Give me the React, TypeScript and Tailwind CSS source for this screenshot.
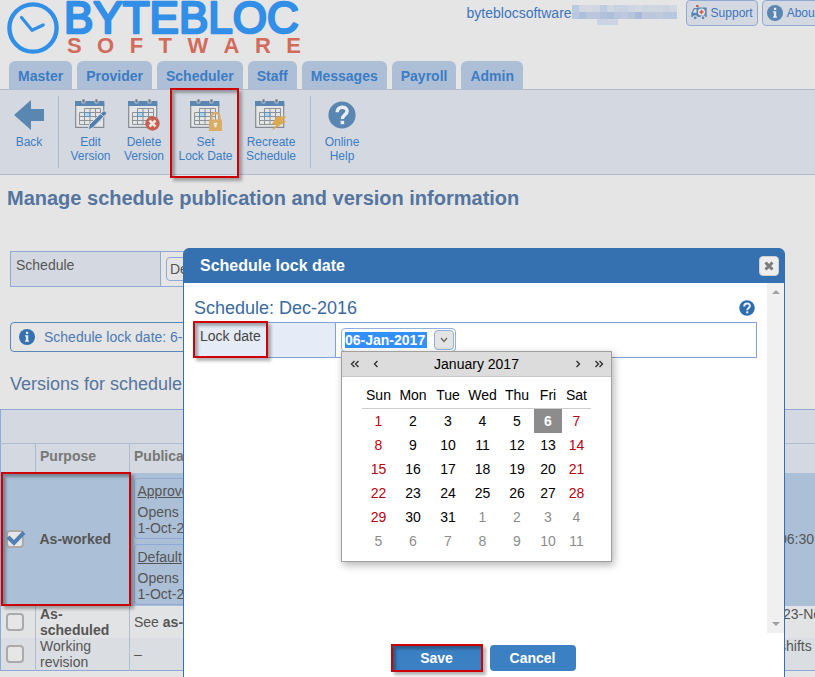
import React, { useState } from "react";

const tabs = ["Master", "Provider", "Scheduler", "Staff", "Messages", "Payroll", "Admin"];

const weekDays = [
  { name: "Sun", width: "w-[33px]" },
  { name: "Mon", width: "w-[36px]" },
  { name: "Tue", width: "w-[34px]" },
  { name: "Wed", width: "w-[35px]" },
  { name: "Thu", width: "w-[34px]" },
  { name: "Fri", width: "w-[28px]" },
  { name: "Sat", width: "w-[29px]" },
];

// January 2017, days after the 31st belong to the next month
const weeks = [0, 1, 2, 3, 4, 5].map((w) => weekDays.map((_, d) => w * 7 + d + 1));

const maskTop = [
  "bg-[#bccadf]", "bg-[#d0d7e3]", "bg-[#d3d8e2]", "bg-[#d0d7e3]", "bg-[#bfcce0]",
  "bg-[#cfd6e2]", "bg-[#c9d2e1]", "bg-[#c8d2e2]", "bg-[#ced6e3]", "bg-[#d2d8e2]",
  "bg-[#cdd5e2]", "bg-[#cfd6e2]", "bg-[#d0d6e1]", "bg-[#ccd4e1]", "bg-[#d2d8e2]",
];
const maskBottom = [
  "bg-[#b9c7de]", "bg-[#adc0db]", "bg-[#b9c6dd]", "bg-[#bcc7de]", "bg-[#b3c1dc]",
  "bg-[#abbfd9]", "bg-[#b9c6dd]", "bg-[#bfc9dd]", "bg-[#b6c4dc]", "bg-[#abb9d9]",
  "bg-[#bdc8dd]", "bg-[#bac7dd]", "bg-[#c0cadd]", "bg-[#b9c6dd]", "bg-[#b8c7df]",
];

const Highlight: React.FC<{ className: string }> = ({ className }) => (
  <div
    className={`absolute pointer-events-none border-2 border-[#cc0000] shadow-[3px_3px_3px_rgba(0,0,0,0.3),inset_3px_3px_3px_rgba(0,0,0,0.3)] ${className}`}
  />
);

const ClockLogo = () => (
  <svg className="w-13 h-13 shrink-0" viewBox="0 0 52 52" fill="none" stroke="#328fe8">
    <circle cx="26" cy="26" r="23.6" strokeWidth="4.4" />
    <path d="M14.5 15.5 25 28.3 36.2 23" strokeWidth="3.2" strokeLinecap="round" strokeLinejoin="round" />
  </svg>
);

const CalendarIcon: React.FC<{ children?: React.ReactNode }> = ({ children }) => (
  <svg className="w-8 h-8" viewBox="0 0 32 32">
    <path d="M.7 5v23.4h28V5z" fill="#e4e5e7" stroke="#858b92" strokeWidth="1.2" />
    <path d="M0 2h29.3v5H0z" fill="#5a86b2" />
    <path d="M7 0h3v4H7zM20 0h3v4h-3z" fill="#747980" stroke="#d4d9e1" strokeWidth=".7" />
    <path d="M9.5 13.5H15v4H9.5z" fill="#b2d5ec" />
    <path
      d="M9.5 9.5h16v12h-5v4h-16v-12h21M4.5 17.5h21M4.5 21.5h16M9.5 9.5v16M15 9.5v16M20.5 9.5v12"
      fill="none"
      stroke="#8e9196"
      strokeWidth="1"
    />
    <path d="M9.5 13.5H15v4H9.5z" fill="none" stroke="#5a92c0" strokeWidth=".8" />
    {children}
  </svg>
);

const BackIcon = () => (
  <svg className="w-8 h-8" viewBox="0 0 32 32">
    <path d="M1 16 18 1v9h13v12H18v9z" fill="#5a86b2" />
  </svg>
);

const EditIcon = () => (
  <CalendarIcon>
    <path
      d="m13 31 1.5-5.5L28 12.3q1-1 2.2 0l.8.8q1.2 1.2.1 2.2L17.8 28.8z"
      fill="#4f7eae"
      stroke="#d9dde4"
      strokeWidth="1"
    />
    <path d="m25.5 14.6 3.3 3.3" stroke="#d9dde4" strokeWidth="1" />
  </CalendarIcon>
);

const DeleteIcon = () => (
  <CalendarIcon>
    <circle cx="24.5" cy="24.5" r="7.2" fill="#c8604f" />
    <path d="m21.5 21.5 6 6m0-6-6 6" stroke="#eee6e3" strokeWidth="2.6" />
  </CalendarIcon>
);

const LockIcon = () => (
  <CalendarIcon>
    <path d="M21.5 21v-3.2c0-5.2 8-5.2 8 0V21" fill="none" stroke="#d9ad67" strokeWidth="2.2" />
    <path d="M19 20.5h13V32H19z" fill="#d9ad67" />
    <path d="M24 24h3v1.6h-.8V28h-1.6v-2.4H24z" fill="#f2eadb" stroke="#f2eadb" strokeWidth=".5" />
  </CalendarIcon>
);

const RecreateIcon = () => (
  <CalendarIcon>
    <path d="M22 17.5H31.5L27 22H31.5L16 32 21.5 25.6H16.5z" fill="#dca94f" />
  </CalendarIcon>
);

const HelpIcon: React.FC<{ className: string; color: string }> = ({ className, color }) => (
  <svg className={className} viewBox="0 0 28 28">
    <circle cx="14" cy="14" r="13.6" fill={color} />
    <path
      d="M9.1 11.2c0-6.6 10-6.6 10-.9 0 3.8-4.7 3.6-4.7 7.6"
      fill="none"
      stroke="#e9eef4"
      strokeWidth="3.5"
    />
    <path d="M12.6 19.8h3.6v3.4h-3.6z" fill="#e9eef4" />
  </svg>
);

const InfoIcon: React.FC<{ color: string }> = ({ color }) => (
  <svg className="w-4 h-4 shrink-0" viewBox="0 0 16 16">
    <circle cx="8" cy="8" r="8" fill={color} />
    <path d="M6.9 2.8h2.3v2.1H6.9zM6 6.3h3.2v5.2H10v1.2H6v-1.2h.9v-4H6z" fill="#e6ebf1" />
  </svg>
);

const AmbulanceIcon = () => (
  <svg className="w-4 h-4 shrink-0" viewBox="0 0 16 16">
    <path d="M5 0h2.6v2H5z" fill="#cf5f4c" />
    <path d="M.3 12V8.3L2.8 3H6v-.6h9.7V12z" fill="#5a86b2" />
    <path d="M3.5 4.3h2v3.5H2z" fill="#dfe5ec" />
    <circle cx="10.5" cy="7" r="3.5" fill="#e9e9ea" />
    <path d="M10.5 4.8v4.4M8.3 7h4.4" stroke="#cf5f4c" strokeWidth="1.6" />
    <circle cx="4.2" cy="12.8" r="2" fill="#5a86b2" stroke="#d4d9e1" strokeWidth="1.2" />
    <circle cx="12" cy="12.8" r="2" fill="#5a86b2" stroke="#d4d9e1" strokeWidth="1.2" />
  </svg>
);

const ToolButton: React.FC<{
  icon: React.ReactNode;
  lines: string[];
  className: string;
  highlighted?: boolean;
}> = ({ icon, lines, className, highlighted }) => (
  <button className={`relative flex flex-col items-center pt-[3px] text-xs leading-[14px] text-[#3b7cc4] ${className}`}>
    {icon}
    <span className="mt-1 whitespace-nowrap">
      {lines.map((line) => (
        <span key={line} className="block">
          {line}
        </span>
      ))}
    </span>
    {highlighted && <Highlight className="-top-2 -left-px w-[69px] h-[90px]" />}
  </button>
);

const Header = () => (
  <header className="flex h-[61px]">
    <div className="flex shrink-0 gap-1.5 pl-[7px] pt-0.5">
      <ClockLogo />
      <div className="w-[240px] -mt-0.5">
        <svg className="w-[240px] h-9" viewBox="0 0 240 36">
          <text
            x="-1"
            y="33"
            fontFamily="Liberation Sans, sans-serif"
            fontSize="44"
            fill="#328fe8"
            stroke="#328fe8"
            strokeWidth="2.5"
            strokeLinejoin="round"
          >
            BYTEBLOC
          </text>
        </svg>
        <div className="flex justify-between pl-0.5 pr-1 text-[22px] leading-5 font-bold text-[#d36b5d]">
          {"SOFTWARE".split("").map((letter, index) => (
            <span key={index}>{letter}</span>
          ))}
        </div>
      </div>
    </div>

    <div className="flex items-start ml-auto -mr-2 text-xs text-[#3b74bd]">
      <a href="#account" className="mt-1 text-sm leading-[18px]">
        byteblocsoftware
      </a>
      <div className="mt-[5px] mr-[9px]">
        <div className="flex">
          {maskTop.map((color, index) => (
            <div key={index} className={`w-[7px] h-[7px] ${color}`} />
          ))}
        </div>
        <div className="flex">
          {maskBottom.map((color, index) => (
            <div key={index} className={`w-[7px] h-[7px] ${color}`} />
          ))}
        </div>
        <div className="w-[21px] h-1.5 ml-[25px] bg-[#ccd4e1]" />
      </div>
      <button className="flex items-center gap-1 h-[26px] px-1 mr-1 rounded border border-[#8eaad4] bg-[#d4d9e1]">
        <AmbulanceIcon />
        Support
      </button>
      <button className="flex items-center gap-1 h-[26px] px-1 rounded border border-[#8eaad4] bg-[#d4d9e1]">
        <InfoIcon color="#5a86b2" />
        About
      </button>
    </div>
  </header>
);

const Toolbar = () => (
  <div className="flex h-[86px] py-1.5 border-y border-[#b0bdd1] bg-[#d4d9e1]">
    <div className="flex w-[59px] pl-0.5 border-r border-[#b0bdd1]">
      <ToolButton icon={<BackIcon />} lines={["Back"]} className="w-[54px]" />
    </div>
    <div className="flex w-[252px] pl-[5px] border-r border-[#b0bdd1]">
      <ToolButton icon={<EditIcon />} lines={["Edit", "Version"]} className="w-[53px]" />
      <ToolButton icon={<DeleteIcon />} lines={["Delete", "Version"]} className="w-[54px]" />
      <ToolButton icon={<LockIcon />} lines={["Set", "Lock Date"]} className="w-[69px]" highlighted />
      <ToolButton icon={<RecreateIcon />} lines={["Recreate", "Schedule"]} className="w-[62px]" />
    </div>
    <ToolButton
      icon={<HelpIcon className="w-7 h-7 my-0.5" color="#5a86b2" />}
      lines={["Online", "Help"]}
      className="w-[62px]"
    />
  </div>
);

const TickBox: React.FC<{ label: string; defaultChecked?: boolean }> = ({ label, defaultChecked }) => {
  const [checked, setChecked] = useState(!!defaultChecked);

  return (
    <label className="relative block w-[18px] h-[18px] ml-[5px]">
      <input
        type="checkbox"
        aria-label={label}
        checked={checked}
        onChange={() => setChecked(!checked)}
        className="block appearance-none w-[18px] h-[18px] rounded border-2 border-[#aaaaaa] bg-[#e6e6e6]"
      />
      {checked && (
        <svg className="absolute top-0 left-0 w-5 h-4 pointer-events-none" viewBox="0 0 20 16">
          <path d="m2 7 6 6L18 2.5" fill="none" stroke="#4f7fb4" strokeWidth="4" />
        </svg>
      )}
    </label>
  );
};

const Publication: React.FC<{ title: string }> = ({ title }) => (
  <div className="h-[61px] px-[3px] pt-1 rounded border border-[#8eaad4] whitespace-nowrap leading-4">
    <a href="#publication" className="underline">
      {title}
    </a>
    <p className="mt-[5px]">Opens on</p>
    <p>1-Oct-2016</p>
  </div>
);

const VersionsTable = () => (
  <table className="w-full table-fixed border border-r-0 border-[#8eaad4] text-sm leading-4 text-[#555555]">
    <colgroup>
      <col className="w-[35px]" />
      <col className="w-[94px]" />
      <col />
      <col className="w-9" />
    </colgroup>
    <thead className="bg-[#d4d9e1] text-[#777777] text-left">
      <tr className="h-[34px] border-b border-[#b0bdd1]">
        <th colSpan={4} />
      </tr>
      <tr className="h-[29px]">
        <th className="border-r border-[#b0bdd1]" />
        <th className="px-1 pb-1 border-r border-[#b0bdd1]">Purpose</th>
        <th className="px-1 pb-1">Publications</th>
        <th />
      </tr>
    </thead>
    <tbody>
      <tr className="h-[133px] bg-[#abbfd6]">
        <td className="relative">
          <TickBox label="As-worked" defaultChecked />
          <Highlight className="-top-px left-0 w-[130px] h-[134px]" />
        </td>
        <td className="px-1 font-bold">As-worked</td>
        <td className="pl-1 pt-1">
          <div className="flex flex-col gap-[5px]">
            <Publication title="Approved" />
            <Publication title="Default" />
          </div>
        </td>
        <td className="whitespace-nowrap">06:30</td>
      </tr>
      <tr className="h-8 bg-[#e2e3e4]">
        <td className="border-r border-[#b0bdd1]">
          <TickBox label="As-scheduled" />
        </td>
        <td className="px-1 font-bold border-r border-[#b0bdd1]">As-scheduled</td>
        <td className="px-1">
          See <b>as-worked</b>
        </td>
        <td className="pl-1 align-top whitespace-nowrap">23-Nov</td>
      </tr>
      <tr className="h-8 bg-[#dadde2]">
        <td className="border-r border-[#b0bdd1]">
          <TickBox label="Working revision" />
        </td>
        <td className="px-1 border-r border-[#b0bdd1]">Working revision</td>
        <td className="px-1">–</td>
        <td className="pb-4">shifts</td>
      </tr>
    </tbody>
  </table>
);

const Chevron: React.FC<{ label: string; d: string }> = ({ label, d }) => (
  <button aria-label={label} className="flex items-center justify-center w-[21px] h-6">
    <svg className="w-2.5 h-2" viewBox="0 0 10 8" fill="none" stroke="#333333" strokeWidth="1.4">
      <path d={d} />
    </svg>
  </button>
);

const dayColor = (day: number, column: number) => {
  if (day === 6) return "bg-[#8c8c8c] text-white font-bold";
  if (day > 31) return "text-[#8c8c8c]";
  if (column === 0 || column === 6) return "text-[#bb0011]";
  return "text-black";
};

const Calendar = () => (
  <div className="absolute z-20 top-[28px] left-[5px] w-[271px] h-[211px] border border-[#a0a0a0] bg-white text-sm text-black shadow-[2px_3px_8px_rgba(0,0,0,0.3)]">
    <div className="flex items-center h-[25px] px-0.5 border-b border-[#c5c5c5] bg-[#dcdcdc]">
      <Chevron label="Previous year" d="M4.5 1 1.5 4l3 3M8.5 1l-3 3 3 3" />
      <Chevron label="Previous month" d="m6.5 1-3 3 3 3" />
      <div className="flex-1 text-center">January 2017</div>
      <Chevron label="Next month" d="m3.5 1 3 3-3 3" />
      <Chevron label="Next year" d="m1.5 1 3 3-3 3M5.5 1l3 3-3 3" />
    </div>
    <table className="w-[229px] table-fixed mx-5 mt-[5px] text-center leading-6">
      <thead>
        <tr className="h-[26px] border-b border-[#cccccc]">
          {weekDays.map((day) => (
            <th key={day.name} className={`p-0 font-normal ${day.width}`}>
              {day.name}
            </th>
          ))}
        </tr>
      </thead>
      <tbody>
        {weeks.map((week, index) => (
          <tr key={index}>
            {week.map((day, column) => (
              <td key={day} className={`p-0 ${dayColor(day, column)}`}>
                {day > 31 ? day - 31 : day}
              </td>
            ))}
          </tr>
        ))}
      </tbody>
    </table>
  </div>
);

const LockDateDialog = () => {
  const [date, setDate] = useState("06-Jan-2017");

  return (
    <div
      role="dialog"
      aria-label="Schedule lock date"
      className="absolute z-10 top-[248px] left-[183px] w-[602px] h-[440px] rounded-t-md border border-[#3571b0] bg-white"
    >
      <div className="flex items-center justify-between h-[34px] pl-4 pr-[5px] rounded-t bg-[#3571b0]">
        <h2 className="font-bold text-white">Schedule lock date</h2>
        <button
          aria-label="Close"
          className="flex items-center justify-center w-5 h-5 rounded border border-[#d0d0d0] bg-[#eeeeee]"
        >
          <svg className="w-2.5 h-2.5" viewBox="0 0 10 10">
            <path d="m1.5 1.5 7 7m0-7-7 7" stroke="#7c7c7c" strokeWidth="3" />
          </svg>
        </button>
      </div>

      <div className="flex h-[350px]">
        <div className="flex-1 pl-2.5 pr-2.5 pt-3.5">
          <div className="flex items-center justify-between h-[22px] mb-[3px] pr-0.5">
            <h3 className="text-lg leading-[22px] text-[#3a6a9f]">Schedule: Dec-2016</h3>
            <button aria-label="Help">
              <HelpIcon className="w-4 h-4" color="#2e6db0" />
            </button>
          </div>
          <div className="flex h-9 border border-[#7fa3d4]">
            <div className="relative w-[141px] pl-[5px] pt-px border-r border-[#7fa3d4] bg-[#e5ecf7]">
              <label htmlFor="lock-date" className="text-sm text-[#444444]">
                Lock date
              </label>
              <Highlight className="-top-0.5 -left-0.5 w-[75px] h-[37px]" />
            </div>
            <div className="relative flex-1 pl-[5px] pt-[5px]">
              <div className="flex items-center justify-between w-[115px] h-6 pl-[3px] pr-px rounded border border-[#8fb0de] bg-white">
                <input
                  id="lock-date"
                  value={date}
                  onChange={(e) => setDate(e.target.value)}
                  className="w-[82px] h-4 bg-[#3390ff] text-sm font-bold text-white outline-none"
                />
                <button
                  aria-label="Open calendar"
                  className="flex items-center justify-center w-5 h-5 rounded border border-[#8fb0de] bg-[#e4e4e4]"
                >
                  <svg className="w-2 h-1.5" viewBox="0 0 8 6" fill="none" stroke="#666666" strokeWidth="1.3">
                    <path d="m1 1 3 3.5L7 1" />
                  </svg>
                </button>
              </div>
              <Calendar />
            </div>
          </div>
        </div>
        <div className="flex flex-col items-center justify-between w-[17px] py-[7px] bg-[#f0f0f0]">
          <svg className="w-2 h-1" viewBox="0 0 8 4">
            <path d="m0 4 4-4 4 4z" fill="#a0a0a0" />
          </svg>
          <svg className="w-2 h-1" viewBox="0 0 8 4">
            <path d="m0 0 4 4 4-4z" fill="#a0a0a0" />
          </svg>
        </div>
      </div>

      <div className="flex justify-center gap-[7px] pt-3 pr-0.5 text-sm font-bold text-white">
        <button className="relative w-[92px] h-[26px] bg-[#3b80c3]">
          Save
          <Highlight className="-top-px left-0 w-full h-7" />
        </button>
        <button className="w-[86px] h-[26px] rounded bg-[#3b80c3]">Cancel</button>
      </div>
    </div>
  );
};

const App: React.FC = () => {
  return (
    <div className="relative min-h-screen overflow-hidden bg-[#e5e5e5] font-['Liberation_Sans',Arial,sans-serif]">
      <Header />

      <nav className="flex gap-[5px] h-7 pl-[9px]">
        {tabs.map((tab) => (
          <a
            key={tab}
            href={`#${tab}`}
            className="px-[9px] pt-px rounded-t-md bg-[#adbfd6] text-sm leading-7 font-bold text-[#3b7cc4]"
          >
            {tab}
          </a>
        ))}
      </nav>
      <Toolbar />

      <main>
        <h1 className="pl-[7px] pt-[9px] text-xl leading-7 font-bold text-[#54759f]">
          Manage schedule publication and version information
        </h1>

        <div className="flex h-9 mt-[39px] ml-2.5 mr-10 border border-[#8eaad4] text-sm text-[#555555]">
          <label htmlFor="schedule" className="w-[150px] pl-[5px] pt-[3px] border-r border-[#8eaad4] bg-[#d4d9e1]">
            Schedule
          </label>
          <div className="p-[5px]">
            <select id="schedule" className="appearance-none h-6 px-[3px] rounded border border-[#8eaad4] bg-[#e5e5e5]">
              <option>Dec-2016</option>
            </select>
          </div>
        </div>

        <div className="flex items-center gap-[9px] h-[30px] mt-[35px] ml-2.5 mr-10 pl-2 rounded border border-[#5a86b8] text-sm text-[#4a7ab5]">
          <InfoIcon color="#3571b0" />
          Schedule lock date: 6-Jan-2017
        </div>

        <h2 className="pl-2.5 pt-[19px] pb-[11px] text-lg leading-[27px] text-[#54759f]">Versions for schedule</h2>
        <VersionsTable />
      </main>

      <LockDateDialog />
    </div>
  );
};

export default App;
